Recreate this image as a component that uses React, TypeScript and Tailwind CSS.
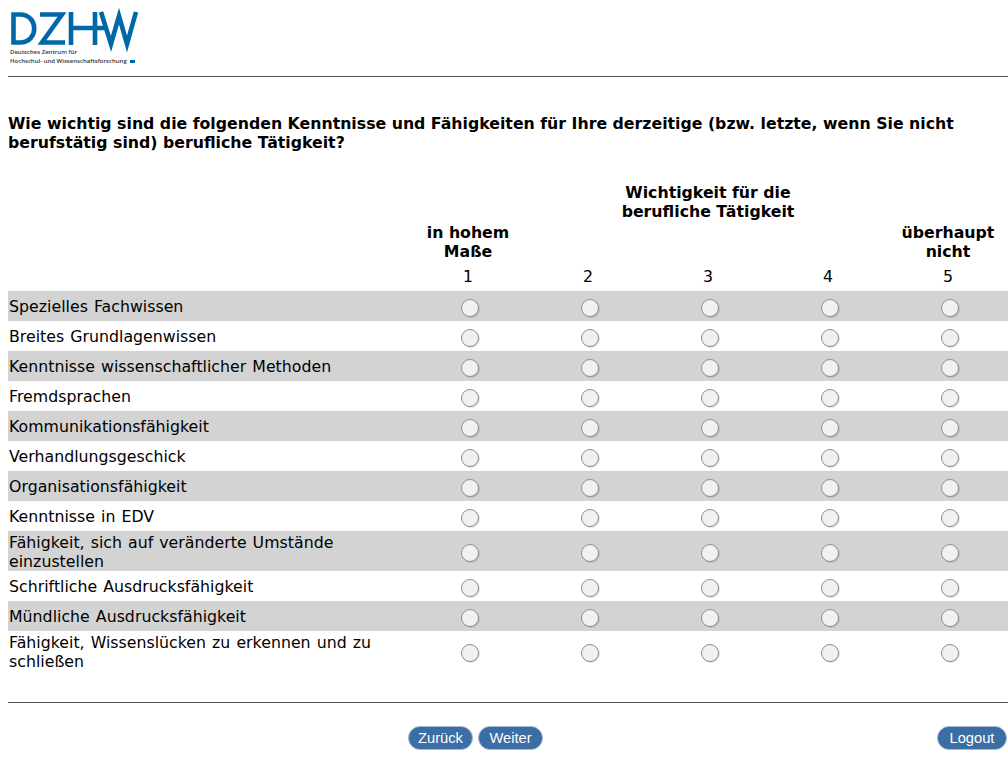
const rows: { label: string; tall?: boolean }[] = [
  { label: "Spezielles Fachwissen" },
  { label: "Breites Grundlagenwissen" },
  { label: "Kenntnisse wissenschaftlicher Methoden" },
  { label: "Fremdsprachen" },
  { label: "Kommunikationsfähigkeit" },
  { label: "Verhandlungsgeschick" },
  { label: "Organisationsfähigkeit" },
  { label: "Kenntnisse in EDV" },
  { label: "Fähigkeit, sich auf veränderte Umstände einzustellen", tall: true },
  { label: "Schriftliche Ausdrucksfähigkeit" },
  { label: "Mündliche Ausdrucksfähigkeit" },
  { label: "Fähigkeit, Wissenslücken zu erkennen und zu schließen", tall: true },
];

function Logo() {
  return (
    <div className="relative h-[76px] w-[200px]">
      <svg className="absolute left-0 top-0" width="200" height="56" viewBox="0 0 200 56" fill="none" stroke="#0068a8" strokeWidth="4.6">
        <path d="M13.5 14.5 H20 C39 14.5 39 42.5 20 42.5 H13.5 Z" />
        <path d="M40 14.5 H62 L42 42.5 H65" />
        <path d="M71 12 V45 M95 12 V45 M71 28 H107" />
        <path d="M101 12 L111 44 L119 16 L127 44 L136 12" />
      </svg>
      <div className="absolute left-[10px] top-[48px] font-['Open_Sans',sans-serif] text-[6px] leading-[9px] font-semibold whitespace-nowrap text-[#333]">
        <div>Deutsches Zentrum für</div>
        <div className="flex items-center gap-[3px]">
          Hochschul- und Wissenschaftsforschung
          <span className="h-[3px] w-[5px] bg-[#0068a8]" />
        </div>
      </div>
    </div>
  );
}

function Radio() {
  return (
    <span className="block h-[18px] w-[18px] translate-x-[2px] rounded-full border border-[#8f8f8f] bg-[#f1f1f3] shadow-[1px_1px_0_rgba(0,0,0,0.12)]" />
  );
}

function Pill({ children, w }: { children: string; w: string }) {
  return (
    <span className={`flex h-[24px] items-center justify-center rounded-full border border-[#a9b9cc] bg-[#3a6ea5] font-['Liberation_Sans',sans-serif] text-[14.7px] text-white ${w}`}>
      {children}
    </span>
  );
}

export default function App() {
  return (
    <div className="h-[766px] w-[1008px] overflow-hidden bg-white font-['DejaVu_Sans',sans-serif] text-[15.75px] leading-[19px] text-black">
      <Logo />
      <div className="ml-[8px] h-[1px] bg-[#555]" />
      <h1 className="ml-[8px] mt-[37px] w-[990px] font-bold">
        Wie wichtig sind die folgenden Kenntnisse und Fähigkeiten für Ihre derzeitige (bzw. letzte, wenn Sie nicht berufstätig sind) berufliche Tätigkeit?
      </h1>

      <div className="ml-[8px] mt-[31px] grid h-[78px] grid-cols-[400px_120px_360px_120px] text-center font-bold">
        <div />
        <div className="self-end">in hohem<br />Maße</div>
        <div>Wichtigkeit für die<br />berufliche Tätigkeit</div>
        <div className="self-end">überhaupt<br />nicht</div>
      </div>
      <div className="ml-[8px] grid h-[30px] grid-cols-[400px_repeat(5,120px)] items-center text-center">
        <div />
        {[1, 2, 3, 4, 5].map((n) => (
          <div key={n}>{n}</div>
        ))}
      </div>

      <div className="ml-[8px]">
        {rows.map((r, i) => (
          <div
            key={r.label}
            className={`grid grid-cols-[400px_repeat(5,120px)] items-center ${r.tall ? "h-[40px]" : "h-[30px]"} ${i % 2 === 0 ? "bg-[#d3d3d3]" : "bg-white"}`}
          >
            <div className={`pl-[1px] pr-[20px] tracking-[0.02px] [word-spacing:1px] ${r.tall ? "pt-[2px]" : ""}`}>{r.label}</div>
            {[1, 2, 3, 4, 5].map((n) => (
              <div key={n} className="flex justify-center pt-[4px]">
                <Radio />
              </div>
            ))}
          </div>
        ))}
      </div>

      <div className="ml-[8px] mt-[31px] h-[1px] bg-[#555]" />
      <div className="relative mt-[23px] flex h-[24px] pl-[408px]">
        <div className="flex gap-[5px]">
          <Pill w="w-[65px]">Zurück</Pill>
          <Pill w="w-[65px]">Weiter</Pill>
        </div>
        <div className="ml-auto mr-[1px]">
          <Pill w="w-[70px]">Logout</Pill>
        </div>
      </div>
    </div>
  );
}
